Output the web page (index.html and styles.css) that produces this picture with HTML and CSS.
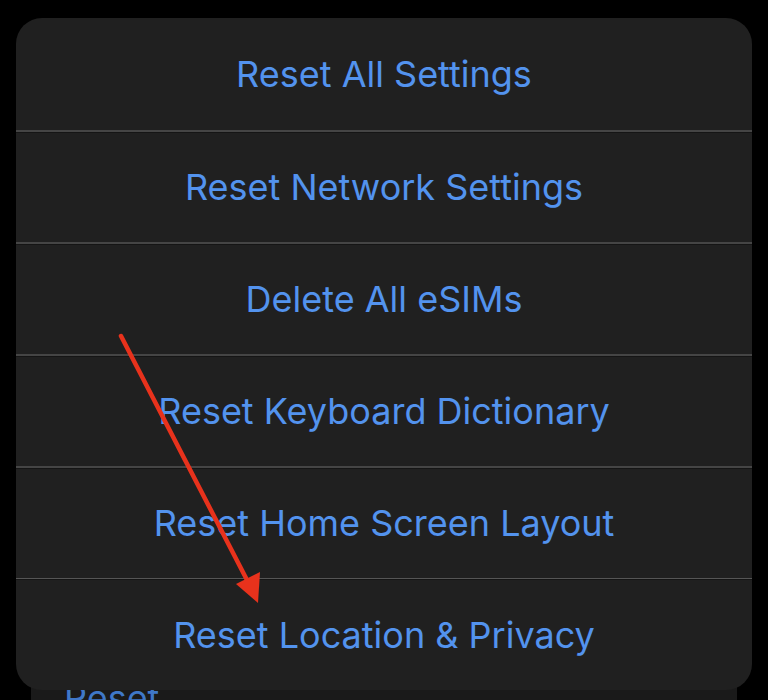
FILE: index.html
```html
<!DOCTYPE html>
<html lang="en">
<head>
    <meta charset="UTF-8">
    <meta name="viewport" content="width=device-width, initial-scale=1.0">
    <title>Reset</title>
    <link rel="stylesheet" href="styles.css">
</head>
<body>
    <div class="underlay">
        <div class="underlay-item">Reset</div>
    </div>

    <div class="sheet">
        <div class="option">Reset All Settings</div>
        <div class="option">Reset Network Settings</div>
        <div class="option">Delete All eSIMs</div>
        <div class="option">Reset Keyboard Dictionary</div>
        <div class="option">Reset Home Screen Layout</div>
        <div class="option">Reset Location &amp; Privacy</div>
    </div>

    <!-- annotation arrow -->
    <svg class="arrow" width="768" height="700" viewBox="0 0 768 700">
        <line x1="121" y1="336" x2="247" y2="580" stroke="#e8321c" stroke-width="4.5" stroke-linecap="round"/>
        <polygon points="258,603 236,584 260,572" fill="#e8321c"/>
    </svg>
</body>
</html>
```

FILE: styles.css
```css
body {
    margin: 0;
    padding: 0;
    background-color: #000;
    font-family: Inter, "Noto Sans", sans-serif;
    height: 700px;
    overflow: hidden;
    position: relative;
}

.underlay {
    margin: 668px 31px 0;
    height: 60px;
    background-color: #1a1a1a;
    padding-left: 33px;
}

.underlay-item {
    padding-top: 8px;
    font-size: 36px;
    color: #3f78c8;
}

.sheet {
    position: absolute;
    left: 16px;
    top: 18px;
    width: 736px;
    background-color: #202020;
    border-radius: 26px;
    overflow: hidden;
    display: flex;
    flex-direction: column;
}

.option {
    height: 112px;
    display: flex;
    align-items: center;
    justify-content: center;
    font-size: 36px;
    color: #5393ee;
    box-sizing: border-box;
}

.option + .option {
    border-top: 2px solid #454545;
    box-shadow: inset 0 1px 0 #151515;
}

.option:last-child {
    border-top: 1px solid #555;
}

.arrow {
    position: absolute;
    left: 0;
    top: 0;
}
```
